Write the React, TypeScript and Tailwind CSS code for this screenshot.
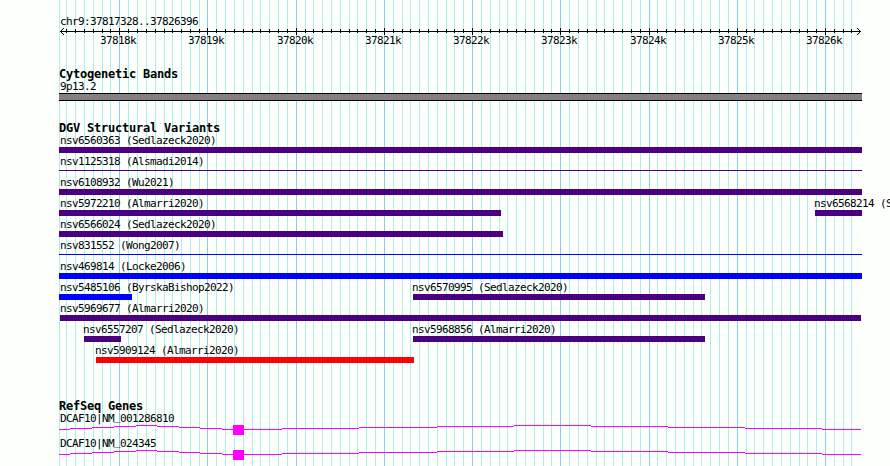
type Variant = {
  name: string;
  start: number;
  end: number;
  color?: string;
  thin?: boolean;
};

// Everything horizontal is in pixels from the left edge of the image
const LEFT = 59;
const RIGHT = 862;

const MINOR = [
  59, 66, 75, 84, 93, 102, 110, 128, 137, 146, 155, 164, 172, 181, 190, 199,
  216, 225, 234, 243, 252, 260, 269, 278, 287, 305, 313, 322, 331, 340, 349, 357, 366, 375,
  393, 402, 410, 419, 428, 437, 446, 454, 463, 481, 490, 499, 507, 516, 525, 534, 543, 551,
  569, 578, 587, 596, 604, 613, 622, 631, 640, 657, 666, 675, 684, 693, 701, 710, 719, 728,
  746, 754, 763, 772, 781, 790, 799, 807, 816, 834, 843, 851,
];

const MAJOR = [
  { x: 119, label: '37818k' },
  { x: 207, label: '37819k' },
  { x: 296, label: '37820k' },
  { x: 384, label: '37821k' },
  { x: 472, label: '37822k' },
  { x: 560, label: '37823k' },
  { x: 649, label: '37824k' },
  { x: 737, label: '37825k' },
  { x: 825, label: '37826k' },
];

const ROWS: Variant[][] = [
  [{ name: 'nsv6560363 (Sedlazeck2020)', start: LEFT, end: RIGHT }],
  [{ name: 'nsv1125318 (Alsmadi2014)', start: LEFT, end: RIGHT, thin: true }],
  [{ name: 'nsv6108932 (Wu2021)', start: LEFT, end: RIGHT }],
  [
    { name: 'nsv5972210 (Almarri2020)', start: LEFT, end: 501 },
    { name: 'nsv6568214 (S', start: 815, end: RIGHT },
  ],
  [{ name: 'nsv6566024 (Sedlazeck2020)', start: LEFT, end: 503 }],
  [{ name: 'nsv831552 (Wong2007)', start: LEFT, end: RIGHT, color: 'bg-[#0000ff]', thin: true }],
  [{ name: 'nsv469814 (Locke2006)', start: LEFT, end: RIGHT, color: 'bg-[#0000ff]' }],
  [
    { name: 'nsv5485106 (ByrskaBishop2022)', start: LEFT, end: 132, color: 'bg-[#0000ff]' },
    { name: 'nsv6570995 (Sedlazeck2020)', start: 413, end: 705 },
  ],
  [{ name: 'nsv5969677 (Almarri2020)', start: 60, end: 861 }],
  [
    { name: 'nsv6557207 (Sedlazeck2020)', start: 84, end: 121 },
    { name: 'nsv5968856 (Almarri2020)', start: 413, end: 705 },
  ],
  [{ name: 'nsv5909124 (Almarri2020)', start: 96, end: 414, color: 'bg-[#ff0000]' }],
];

// [from, to, height above the baseline]
const INTRONS = [
  [59, 70, 0], [70, 92, 1], [92, 114, 2], [114, 136, 3], [136, 157, 4],
  [157, 179, 3], [179, 200, 2], [200, 222, 1], [222, 233, 0],
  [244, 282, 0], [282, 359, 1], [359, 437, 2], [437, 514, 3], [514, 591, 4],
  [591, 668, 3], [668, 745, 2], [745, 822, 1], [822, 861, 0],
];

const SMALL = "font-['DejaVu_Sans_Mono',monospace] text-[11px] leading-[14px] tracking-[-0.622px] whitespace-pre";

function GridLines() {
  return (
    <svg className="absolute inset-0" width="890" height="466" shapeRendering="crispEdges">
      {MINOR.map((x) => (
        <rect key={x} x={x} y="0" width="1" height="466" fill="#afeeee" />
      ))}
      {MAJOR.map(({ x }) => (
        <rect key={x} x={x} y="0" width="1" height="466" fill="#87ceeb" />
      ))}
    </svg>
  );
}

function Ruler() {
  return (
    <div className="h-[41px]">
      <svg className="block" width="890" height="8" shapeRendering="crispEdges">
        <rect x="60" y="4" width="801" height="1" />
        {MINOR.slice(1).map((x) => (
          <rect key={x} x={x} y="2" width="1" height="4" />
        ))}
        {MAJOR.map(({ x }) => (
          <rect key={x} x={x} y="1" width="1" height="7" />
        ))}
        <path d="M61 3h1v1h-1zM62 2h1v1h-1zM63 1h1v1h-1zM61 5h1v1h-1zM62 6h1v1h-1zM63 7h1v1h-1z" />
        <path d="M859 3h1v1h-1zM858 2h1v1h-1zM857 1h1v1h-1zM859 5h1v1h-1zM858 6h1v1h-1zM857 7h1v1h-1z" />
      </svg>
      <div className="flex pl-[100px]">
        {MAJOR.map(({ x, label }, i) => (
          <span
            key={label}
            className={`${SMALL} block shrink-0 -mt-px`}
            style={{ width: i < MAJOR.length - 1 ? MAJOR[i + 1].x - x : 40 }}
          >
            {label}
          </span>
        ))}
      </div>
    </div>
  );
}

function TrackTitle({ children }: { children: string }) {
  return (
    <h2 className="h-3 pl-[59px] font-['DejaVu_Sans_Mono',monospace] text-[12px] leading-[13px] font-bold tracking-[-0.224px] whitespace-pre">
      {children}
    </h2>
  );
}

function VariantRow({ items }: { items: Variant[] }) {
  return (
    <div className="grid h-[21px]">
      {items.map((v) => (
        <div key={v.name} className="col-start-1 row-start-1" style={{ marginLeft: v.start }}>
          {/* labels never start left of x=60 */}
          <div className={`${SMALL} h-[13px]`}>
            <span style={{ marginLeft: Math.max(60, v.start - 1) - v.start }}>{v.name}</span>
          </div>
          <div
            className={`${v.color ?? 'bg-[#4b0082]'} ${v.thin ? 'mt-0.5 h-px' : 'h-1.5'}`}
            style={{ width: v.end - v.start }}
          />
        </div>
      ))}
    </div>
  );
}

function Gene({ symbol, accession }: { symbol: string; accession: string }) {
  return (
    <div className="h-[25px]">
      <div className={`${SMALL} h-[13px] pl-[60px]`}>
        {symbol}|NM
        {/* lifted clear of the intron line */}
        <span className="relative -top-0.5">_</span>
        {accession}
      </div>
      <svg className="block" width="890" height="11" shapeRendering="crispEdges" fill="#ff00ff">
        {INTRONS.map(([from, to, up]) => (
          <rect key={from} x={from} y={4 - up} width={to - from} height="1" />
        ))}
        <rect x="233" y="0" width="11" height="10" />
      </svg>
    </div>
  );
}

function App() {
  return (
    <div className="relative h-[466px] w-[890px] overflow-hidden bg-[#fdfffc] text-black">
      <GridLines />
      <div className="relative pt-[15px]">
        <div className={`${SMALL} h-3 pl-[60px]`}>chr9:37817328..37826396</div>
        <Ruler />
        <TrackTitle>Cytogenetic Bands</TrackTitle>
        <div className={`${SMALL} h-[13px] pl-[60px]`}>9p13.2</div>
        <div className="ml-[59px] h-2 w-[803px] border-y border-black bg-[#848084]" />

        <div className="h-[299px] pt-[21px]">
          <TrackTitle>DGV Structural Variants</TrackTitle>
          {ROWS.map((items) => (
            <VariantRow key={items[0].name} items={items} />
          ))}
        </div>

        <TrackTitle>RefSeq Genes</TrackTitle>
        <Gene symbol="DCAF10" accession="001286810" />
        <Gene symbol="DCAF10" accession="024345" />
      </div>
    </div>
  );
}

export default App;
